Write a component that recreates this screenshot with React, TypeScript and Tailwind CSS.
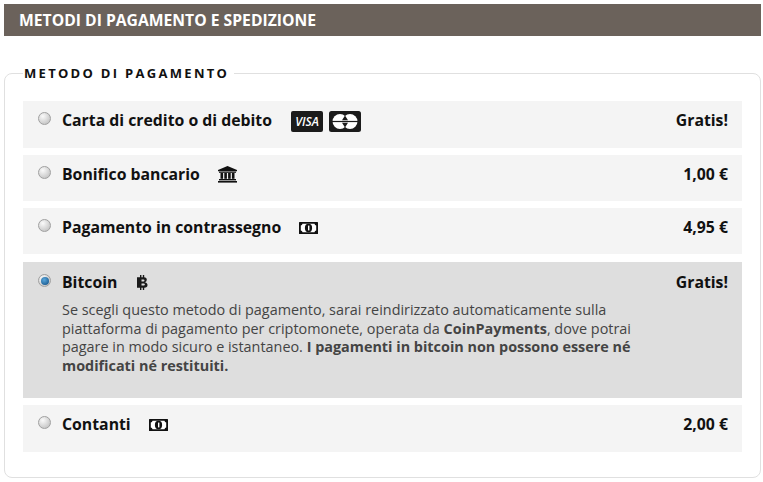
import React from "react";

const font = { fontFamily: '"Open Sans", sans-serif' };

function Radio({ checked }: { checked?: boolean }) {
  return (
    <span className="mt-[3px] flex h-[13px] w-[13px] shrink-0 items-center justify-center rounded-full border border-[#a0a0a0] bg-[radial-gradient(circle_at_35%_30%,#fafafa,#b8b8b8)]">
      {checked && (
        <span className="h-[8px] w-[8px] rounded-full bg-[radial-gradient(circle_at_40%_35%,#5aa7dc,#0b4a80)]" />
      )}
    </span>
  );
}

function Visa() {
  return (
    <span className="flex h-[21px] w-[32px] items-center justify-center rounded-[2px] bg-[#1b1b1b] text-[12px] font-semibold italic leading-none text-white">
      VISA
    </span>
  );
}

function Master() {
  return (
    <svg width="32" height="21" viewBox="0 0 32 21" className="block">
      <rect width="32" height="21" rx="2.5" fill="#1b1b1b" />
      <circle cx="11" cy="10.5" r="7.5" fill="#fff" />
      <circle cx="21" cy="10.5" r="7.5" fill="#fff" />
      <path d="M16 4.6 L13 9.2 H19 Z M16 16.4 L13 11.8 H19 Z" fill="#1b1b1b" />
      <rect x="3" y="9.9" width="26" height="1.2" fill="#1b1b1b" />
    </svg>
  );
}

function Bank() {
  return (
    <svg width="19" height="17" viewBox="0 0 19 17" className="block" fill="#111">
      <path d="M9.5 0 L19 4 V5.2 H0 V4 Z" />
      <rect x="1" y="5.6" width="17" height="1.2" />
      <rect x="2.5" y="7" width="2.6" height="5.8" />
      <rect x="6.3" y="7" width="2.6" height="5.8" />
      <rect x="10.1" y="7" width="2.6" height="5.8" />
      <rect x="13.9" y="7" width="2.6" height="5.8" />
      <rect x="1" y="13" width="17" height="1.4" />
      <rect x="0" y="15" width="19" height="1.6" />
    </svg>
  );
}

function Money() {
  return (
    <svg width="19" height="12" viewBox="0 0 19 12" className="block">
      <rect width="19" height="12" rx="0.5" fill="#111" />
      <path d="M3.5 1.8 H15.5 Q15.7 3.4 17.2 3.6 V8.4 Q15.7 8.6 15.5 10.2 H3.5 Q3.3 8.6 1.8 8.4 V3.6 Q3.3 3.4 3.5 1.8 Z" fill="#fff" />
      <ellipse cx="9.5" cy="6" rx="3.6" ry="4.2" fill="#111" />
      <rect x="9" y="3.6" width="1.4" height="4.8" fill="#fff" />
    </svg>
  );
}

function Btc() {
  return (
    <svg width="13" height="15" viewBox="0 0 12 15" className="block" fill="none" stroke="#1a1a1a">
      <path d="M4.2 0 V15 M7 0 V15" strokeWidth="1.4" />
      <path d="M0.5 2.2 H7.5 Q10.3 2.4 10.3 4.8 Q10.3 6.8 8 7.3 Q11 7.7 11 10 Q11 12.8 7.8 12.8 H0.5" strokeWidth="0" fill="#1a1a1a" />
      <path d="M5 4.6 H6.9 Q8 4.6 8 5.5 Q8 6.4 6.9 6.4 H5 Z M5 8.4 H7.2 Q8.4 8.4 8.4 9.4 Q8.4 10.4 7.2 10.4 H5 Z" strokeWidth="0" fill="#dedede" />
    </svg>
  );
}

function Row({
  label,
  price,
  icons,
  checked,
  className,
  children,
}: {
  label: string;
  price: string;
  icons: React.ReactNode;
  checked?: boolean;
  className: string;
  children?: React.ReactNode;
}) {
  return (
    <div className={`flex justify-between pl-[15px] pr-[14px] ${className}`}>
      <div className="flex min-w-0 flex-col">
        <div className="flex items-start">
          <Radio checked={checked} />
          <span className="ml-[11px] text-[15.8px] font-bold leading-[22px] text-[#111]">{label}</span>
          {icons}
        </div>
        {children}
      </div>
      <span className="shrink-0 text-[15.8px] font-bold leading-[22px] text-[#111]">{price}</span>
    </div>
  );
}

export default function App() {
  return (
    <div style={font} className="h-[482px] w-[763px] overflow-hidden bg-white pl-[4px] pr-[2px] pt-[4px]">
      <h1 className="flex h-[32px] items-center bg-[#6b625b] pl-[15px] pt-[1px] text-[15.7px] font-bold uppercase leading-none text-white">
        Metodi di pagamento e spedizione
      </h1>
      <fieldset className="mt-[28px] h-[414px] rounded-[8px] border border-[#e0e0e0] px-[18px] pb-[24px]">
        <legend className="px-[1px] pr-[5px] text-[13px] font-bold uppercase leading-[18px] tracking-[2.3px] text-[#111]">
          Metodo di pagamento
        </legend>
        <div className="mt-[19px] flex flex-col gap-[7px]">
          <Row
            label="Carta di credito o di debito"
            price="Gratis!"
            className="h-[47px] bg-[#f4f4f4] pt-[8px]"
            icons={
              <span className="ml-[19px] mt-[2px] flex gap-[6px]">
                <Visa />
                <Master />
              </span>
            }
          />
          <Row
            label="Bonifico bancario"
            price="1,00 €"
            className="h-[46px] bg-[#f4f4f4] pt-[8px]"
            icons={
              <span className="ml-[18px] mt-[3px]">
                <Bank />
              </span>
            }
          />
          <Row
            label="Pagamento in contrassegno"
            price="4,95 €"
            className="h-[46px] bg-[#f4f4f4] pt-[8px]"
            icons={
              <span className="ml-[18px] mt-[6px]">
                <Money />
              </span>
            }
          />
          <Row
            label="Bitcoin"
            price="Gratis!"
            checked
            className="mt-[1px] h-[136px] bg-[#dedede] pt-[9px]"
            icons={
              <span className="ml-[19px] mt-[4px]">
                <Btc />
              </span>
            }
          >
            <p className="ml-[24px] mt-[8px] w-[590px] text-[14.4px] leading-[18.7px] text-[#444]">
              Se scegli questo metodo di pagamento, sarai reindirizzato automaticamente sulla piattaforma di pagamento per criptomonete, operata da <b>CoinPayments</b>, dove potrai pagare in modo sicuro e istantaneo. <b>I pagamenti in bitcoin non possono essere né modificati né restituiti.</b>
            </p>
          </Row>
          <Row
            label="Contanti"
            price="2,00 €"
            className="h-[47px] bg-[#f4f4f4] pt-[8px]"
            icons={
              <span className="ml-[18px] mt-[6px]">
                <Money />
              </span>
            }
          />
        </div>
      </fieldset>
    </div>
  );
}
